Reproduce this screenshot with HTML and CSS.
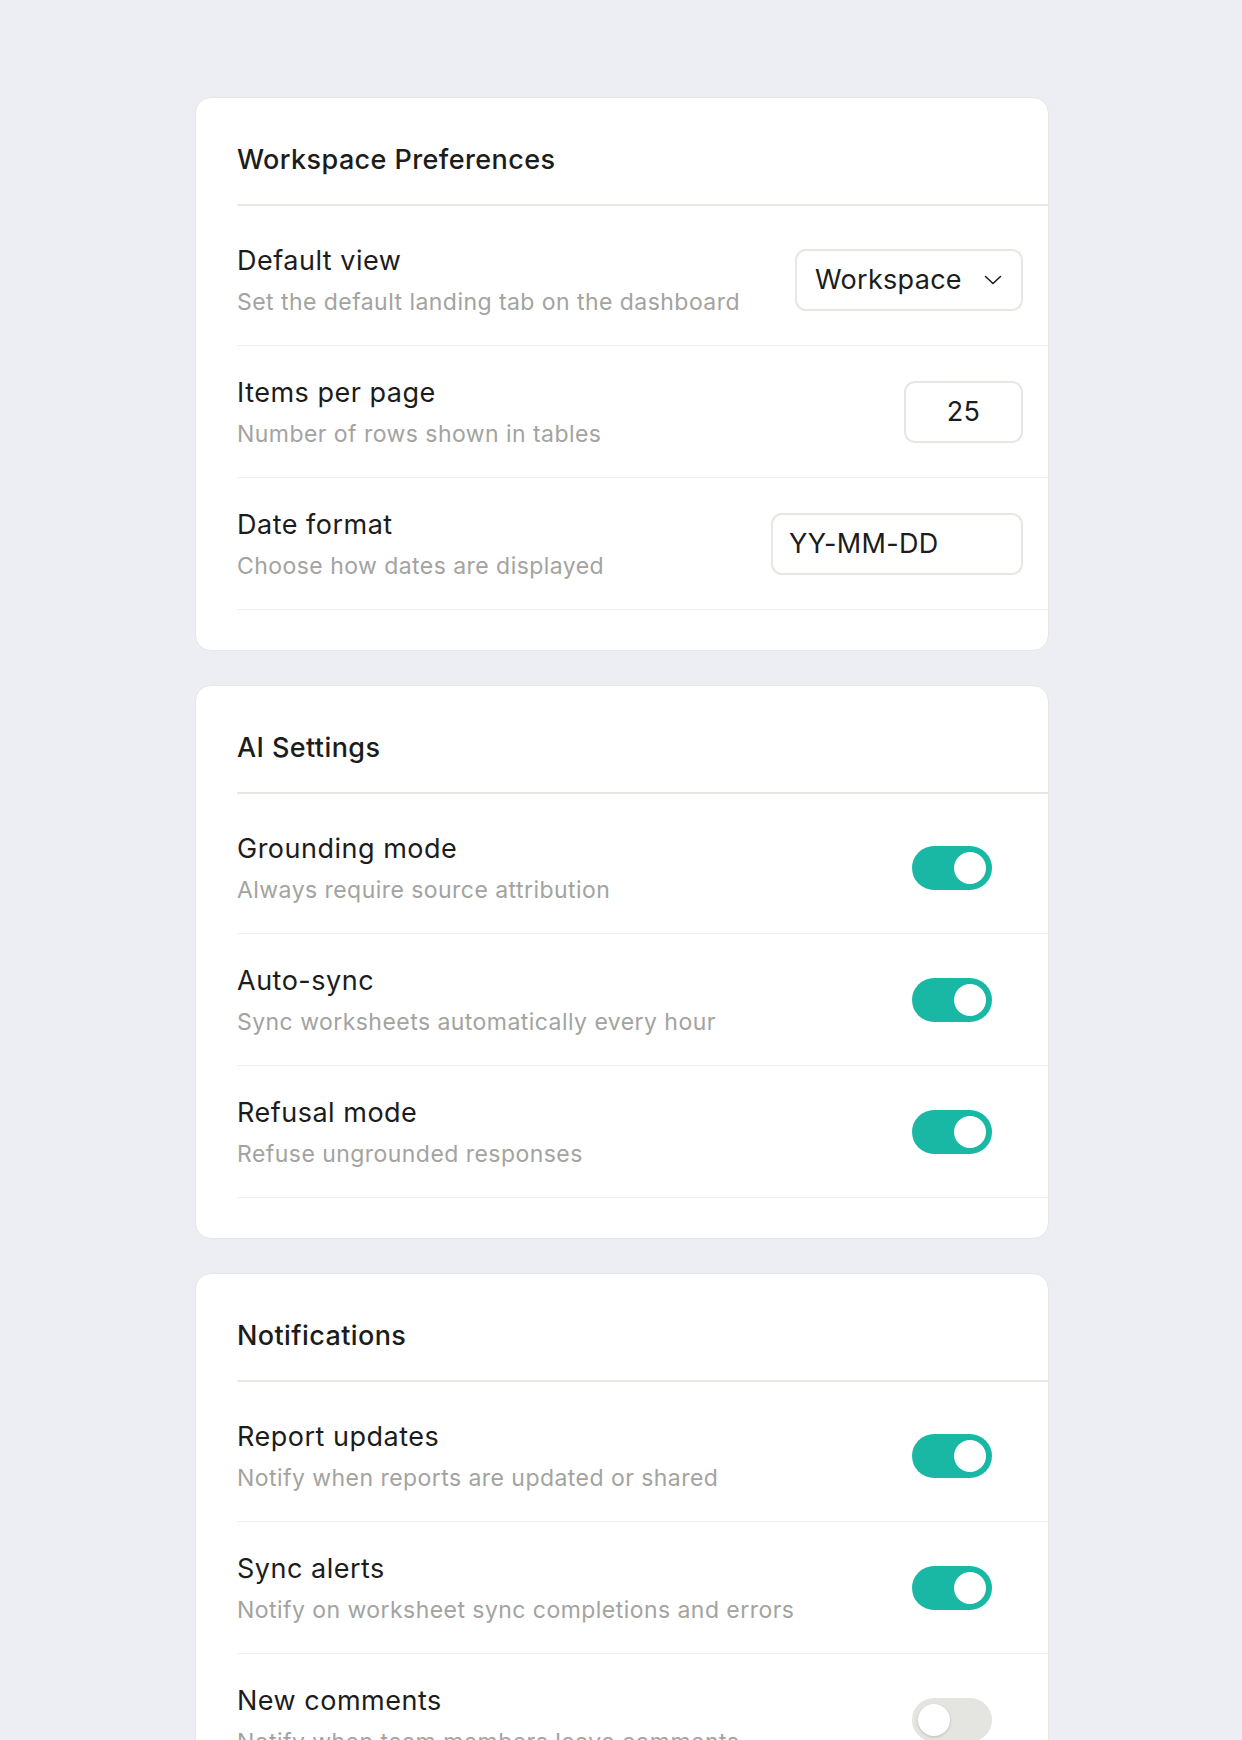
FILE: index.html
```html
<!DOCTYPE html>
<html lang="en">
<head>
<meta charset="utf-8">
<title>Settings</title>
<link rel="stylesheet" href="styles.css">
</head>
<body>
<main class="page">
  <section class="card">
    <h2 class="card-title">Workspace Preferences</h2>
    <div class="rows">
      <div class="row">
        <div class="text">
          <div class="label">Default view</div>
          <div class="sub">Set the default landing tab on the dashboard</div>
        </div>
        <div class="field select">
          <span>Workspace</span>
          <svg class="chev" width="20" height="12" viewBox="0 0 20 12"><path d="M2.5 2.5 L10 9.5 L17.5 2.5" fill="none" stroke="#1c1c1c" stroke-width="1.6" stroke-linecap="round" stroke-linejoin="round"/></svg>
        </div>
      </div>
      <div class="row">
        <div class="text">
          <div class="label">Items per page</div>
          <div class="sub">Number of rows shown in tables</div>
        </div>
        <div class="field number">25</div>
      </div>
      <div class="row">
        <div class="text">
          <div class="label">Date format</div>
          <div class="sub">Choose how dates are displayed</div>
        </div>
        <div class="field date">YY-MM-DD</div>
      </div>
    </div>
  </section>

  <section class="card">
    <h2 class="card-title">AI Settings</h2>
    <div class="rows">
      <div class="row">
        <div class="text">
          <div class="label">Grounding mode</div>
          <div class="sub">Always require source attribution</div>
        </div>
        <div class="toggle on"><span class="knob"></span></div>
      </div>
      <div class="row">
        <div class="text">
          <div class="label">Auto-sync</div>
          <div class="sub">Sync worksheets automatically every hour</div>
        </div>
        <div class="toggle on"><span class="knob"></span></div>
      </div>
      <div class="row">
        <div class="text">
          <div class="label">Refusal mode</div>
          <div class="sub">Refuse ungrounded responses</div>
        </div>
        <div class="toggle on"><span class="knob"></span></div>
      </div>
    </div>
  </section>

  <section class="card">
    <h2 class="card-title">Notifications</h2>
    <div class="rows">
      <div class="row">
        <div class="text">
          <div class="label">Report updates</div>
          <div class="sub">Notify when reports are updated or shared</div>
        </div>
        <div class="toggle on"><span class="knob"></span></div>
      </div>
      <div class="row">
        <div class="text">
          <div class="label">Sync alerts</div>
          <div class="sub">Notify on worksheet sync completions and errors</div>
        </div>
        <div class="toggle on"><span class="knob"></span></div>
      </div>
      <div class="row">
        <div class="text">
          <div class="label">New comments</div>
          <div class="sub">Notify when team members leave comments</div>
        </div>
        <div class="toggle off"><span class="knob"></span></div>
      </div>
    </div>
  </section>
</main>
</body>
</html>
```

FILE: styles.css
```css
* { box-sizing: border-box; }

html, body {
  margin: 0;
  padding: 0;
  background: #edeef3;
  font-family: "Inter", "Noto Sans", sans-serif;
  color: #1c1c1c;
}

.page {
  display: flex;
  flex-direction: column;
  align-items: center;
  gap: 34px;
  padding-top: 97px;
  padding-left: 2px;
}

.card {
  width: 854px;
  background: #ffffff;
  border: 1px solid #e6e6e2;
  border-radius: 16px;
  padding: 0 0 40px 41px;
}

.card-title {
  margin: 0;
  padding: 46px 0 28px;
  font-size: 27px;
  line-height: 32px;
  font-weight: 500;
  letter-spacing: 0.4px;
  color: #1c1c1c;
  border-bottom: 2px solid #e7e7e3;
}

.rows {
  padding-top: 8px;
}

.row {
  display: flex;
  align-items: center;
  justify-content: space-between;
  height: 132px;
  padding-right: 25px;
  border-bottom: 1px solid #f1f1ef;
}

.text {
  display: flex;
  flex-direction: column;
  gap: 8px;
}

.label {
  font-size: 27px;
  line-height: 36px;
  letter-spacing: 0.5px;
  color: #1c1c1c;
}

.sub {
  font-size: 23px;
  line-height: 30px;
  color: #a3a3a0;
  letter-spacing: 0.45px;
}

.field {
  height: 62px;
  border: 2px solid #e6e6e2;
  border-radius: 11px;
  font-size: 27px;
  letter-spacing: 0.3px;
  color: #1c1c1c;
  display: flex;
  align-items: center;
}

.select {
  width: 228px;
  padding: 0 18px 0 18px;
  justify-content: space-between;
}

.chev {
  display: block;
}

.number {
  width: 119px;
  justify-content: center;
}

.date {
  width: 252px;
  padding-left: 16px;
}

.toggle {
  position: relative;
  width: 80px;
  height: 44px;
  border-radius: 22px;
  margin-right: 31px;
}

.toggle.on { background: #19b8a5; }
.toggle.off { background: #e4e4e0; }

.knob {
  position: absolute;
  top: 6px;
  width: 32px;
  height: 32px;
  border-radius: 50%;
  background: #ffffff;
}

.toggle.on .knob { right: 6px; }
.toggle.off .knob { left: 6px; box-shadow: 0 1px 3px rgba(0,0,0,0.18); }
```
